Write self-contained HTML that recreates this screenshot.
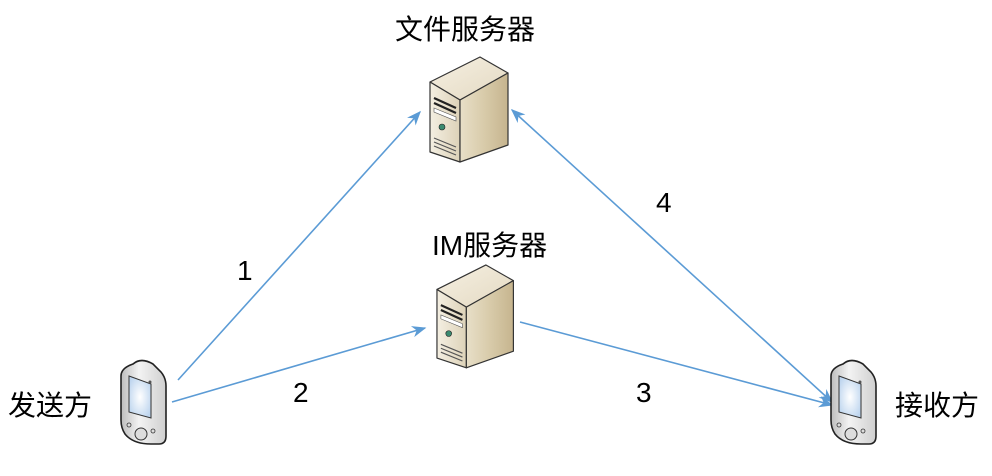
<!DOCTYPE html>
<html><head><meta charset="utf-8"><style>
html,body{margin:0;padding:0;background:#fff;width:992px;height:476px;overflow:hidden}
svg text{font-family:"Liberation Sans","Noto Sans CJK SC",sans-serif;fill:#000}
</style></head><body>
<svg width="992" height="476" viewBox="0 0 992 476" xmlns="http://www.w3.org/2000/svg">
<defs>
<linearGradient id="top" x1="0" y1="0" x2="1" y2="1"><stop offset="0" stop-color="#f6f0e2"/><stop offset="1" stop-color="#e3d9c2"/></linearGradient>
<linearGradient id="front" x1="0" y1="0" x2="1" y2="0"><stop offset="0" stop-color="#f4efe2"/><stop offset="1" stop-color="#ddd2b8"/></linearGradient>
<linearGradient id="side" x1="0" y1="0" x2="1" y2="0"><stop offset="0" stop-color="#e8dfc8"/><stop offset="0.5" stop-color="#d8cbaa"/><stop offset="1" stop-color="#c6b48e"/></linearGradient>
<linearGradient id="ph" x1="0" y1="0" x2="1" y2="0"><stop offset="0" stop-color="#bdbdbd"/><stop offset="0.4" stop-color="#f3f3f3"/><stop offset="1" stop-color="#cfcfcf"/></linearGradient>
<radialGradient id="scr" cx="0.5" cy="0.5" r="0.6"><stop offset="0" stop-color="#ffffff"/><stop offset="1" stop-color="#bcd4ee"/></radialGradient>
<marker id="ah" viewBox="0 0 10 10" refX="9" refY="5" markerWidth="9" markerHeight="9" orient="auto-start-reverse"><path d="M0,1 L10,5 L0,9 L3,5 Z" fill="#5b9bd5"/></marker>
<g id="srv">
<path d="M2,27 L52,2 L80,18 L32,45 Z" fill="url(#top)" stroke="#333" stroke-width="1.2" stroke-linejoin="round"/>
<path d="M2,27 L32,45 L32,107 L2,97 Z" fill="url(#front)" stroke="#333" stroke-width="1.2" stroke-linejoin="round"/>
<path d="M32,45 L80,18 L80,90 L32,107 Z" fill="url(#side)" stroke="#333" stroke-width="1.2" stroke-linejoin="round"/>
<path d="M6,43 L28,53 M6,48 L28,58" stroke="#222" stroke-width="2.2"/>
<path d="M6,53 L28,62 L28,66 L6,57 Z" fill="#fff" stroke="#555" stroke-width="0.6"/>
<circle cx="14" cy="72" r="3" fill="#3a8a70" stroke="#222" stroke-width="0.6"/>
<path d="M6,83 L28,92 M6,87 L28,96 M6,91 L28,100" stroke="#555" stroke-width="1.2"/>
</g>
<g id="phn">
<path d="M12,6 Q20,-1 32,6 L40,14 Q45,20 45,28 L45,78 Q45,86 38,86 L30,86 Q12,86 4,76 Q0,70 0,62 L0,18 Q0,10 12,6 Z" fill="url(#ph)" stroke="#222" stroke-width="1.6"/>
<path d="M8,18 L30,26 L30,60 L8,54 Z" fill="url(#scr)" stroke="#333" stroke-width="1"/>
<circle cx="29" cy="24" r="1.5" fill="#555"/>
<ellipse cx="20" cy="76" rx="6" ry="6" fill="#ddd" stroke="#333" stroke-width="1"/>
<circle cx="8" cy="67" r="2" fill="#ddd" stroke="#333" stroke-width="0.8"/>
<circle cx="32" cy="73" r="2" fill="#ddd" stroke="#333" stroke-width="0.8"/>
</g>
</defs>
<g stroke="#5b9bd5" stroke-width="1.6" fill="none">
<line x1="178" y1="380" x2="420" y2="112" marker-end="url(#ah)"/>
<line x1="172" y1="402" x2="425" y2="328" marker-end="url(#ah)"/>
<line x1="520" y1="322" x2="832" y2="405" marker-end="url(#ah)"/>
<line x1="512" y1="110" x2="832" y2="402" marker-start="url(#ah)" marker-end="url(#ah)"/>
</g>
<use href="#srv" x="428" y="55"/>
<use href="#srv" transform="translate(435,263) scale(0.98)"/>
<use href="#phn" x="121" y="358"/>
<use href="#phn" x="831" y="358"/>
<text x="395" y="39" font-size="28">文件服务器</text>
<text x="432" y="255" font-size="28">IM服务器</text>
<text x="8" y="415" font-size="28">发送方</text>
<text x="895" y="415" font-size="28">接收方</text>
<text x="237" y="280" font-size="28">1</text>
<text x="293" y="402" font-size="28">2</text>
<text x="636" y="402" font-size="28">3</text>
<text x="656" y="212" font-size="28">4</text>
</svg>
</body></html>
